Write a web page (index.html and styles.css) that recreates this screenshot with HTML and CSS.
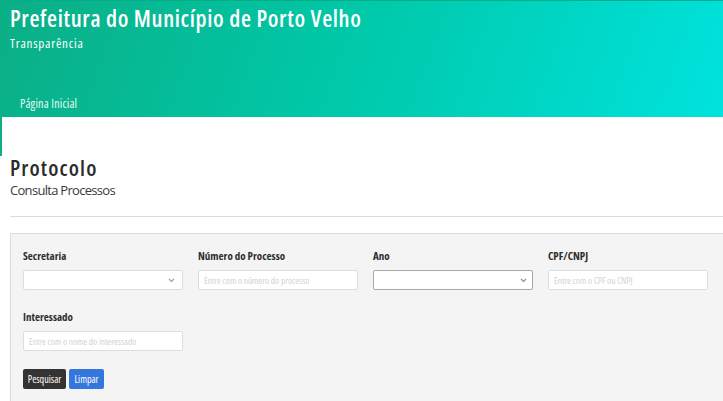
FILE: index.html
```html
<!DOCTYPE html>
<html lang="pt-BR">
<head>
<meta charset="utf-8">
<title>Protocolo - Consulta Processos</title>
<link rel="stylesheet" href="styles.css">
</head>
<body>
<header class="topbar">
  <h1 class="brand">Prefeitura do Município de Porto Velho</h1>
  <div class="brand-sub">Transparência</div>
  <nav class="nav"><a href="#">Página Inicial</a></nav>
</header>
<main class="content">
  <h2 class="page-title">Protocolo</h2>
  <div class="page-sub">Consulta Processos</div>
  <hr class="divider">
  <form class="panel">
    <div class="grid">
      <div class="field">
        <label class="lbl">Secretaria</label>
        <div class="select">
          <svg class="chev" width="7" height="5" viewBox="0 0 7 5"><path d="M1 1 L3.5 3.5 L6 1" fill="none" stroke="#8a9cc0" stroke-width="1.1"/></svg>
        </div>
      </div>
      <div class="field">
        <label class="lbl">Número do Processo</label>
        <div class="input"><span class="ph">Entre com o número do processo</span></div>
      </div>
      <div class="field">
        <label class="lbl">Ano</label>
        <div class="select dark">
          <svg class="chev" width="7" height="5" viewBox="0 0 7 5"><path d="M1 1 L3.5 3.5 L6 1" fill="none" stroke="#8c8c8c" stroke-width="1.1"/></svg>
        </div>
      </div>
      <div class="field">
        <label class="lbl">CPF/CNPJ</label>
        <div class="input"><span class="ph">Entre com o CPF ou CNPJ</span></div>
      </div>
      <div class="field">
        <label class="lbl">Interessado</label>
        <div class="input"><span class="ph">Entre com o nome do interessado</span></div>
      </div>
    </div>
    <div class="actions">
      <button type="button" class="btn btn-dark">Pesquisar</button>
      <button type="button" class="btn btn-blue">Limpar</button>
    </div>
  </form>
</main>
</body>
</html>
```
FILE: styles.css
```css
html, body {
  margin: 0;
  padding: 0;
  overflow: hidden;
  background: #fff;
}
body {
  font-family: "Open Sans", "DejaVu Sans", sans-serif;
  font-stretch: 75%;
  color: #333;
}
.topbar {
  height: 117px;
  box-sizing: border-box;
  border-top: 1px solid #05ad86;
  padding: 3px 10px 0 10px;
  display: flex;
  flex-direction: column;
  background: linear-gradient(110deg, #0bae85 0%, #00c7a6 45%, #00d6c4 75%, #00e3de 100%);
  color: #fff;
}
.brand {
  margin: 0;
  font-size: 23px;
  line-height: 28px;
  font-weight: 600;
  letter-spacing: 0.65px;
}
.brand-sub {
  margin-top: 3px;
  font-size: 13px;
  line-height: 16px;
  letter-spacing: 0.8px;
}
.nav {
  margin-top: auto;
  padding: 0 10px 5px;
  font-size: 12px;
  line-height: 16px;
  letter-spacing: 0.2px;
}
.nav a {
  color: #eafaf5;
  text-decoration: none;
}
.content {
  position: relative;
  padding: 36px 0 0 10px;
  width: calc(100% + 20px);
  box-sizing: border-box;
}
.content::before {
  content: "";
  position: absolute;
  left: 0;
  top: 0;
  width: 2px;
  height: 39px;
  background: #12ad86;
}
.page-title {
  margin: 0;
  font-size: 22px;
  line-height: 28px;
  font-weight: 600;
  letter-spacing: 1.1px;
  color: #2b2b2b;
}
.page-sub {
  font-size: 13px;
  line-height: 18px;
  font-stretch: 100%;
  letter-spacing: -0.7px;
  color: #3a3a3a;
}
.divider {
  margin: 17px 0 0 0;
  border: 0;
  border-top: 1px solid #dcdcdc;
  height: 0;
}
.panel {
  margin-top: 16px;
  background: #f4f4f4;
  border: 1px solid #dcdcdc;
  padding: 15px 12px 20px;
  min-height: 200px;
}
.grid {
  display: grid;
  grid-template-columns: repeat(4, 160px);
  column-gap: 15px;
  row-gap: 20px;
}
.lbl {
  display: block;
  font-size: 11px;
  line-height: 14px;
  font-weight: 700;
  color: #2e2e2e;
  margin-bottom: 7px;
}
.select, .input {
  position: relative;
  height: 20px;
  box-sizing: border-box;
  background: #fff;
  border: 1px solid #dddddd;
  border-radius: 2px;
  display: flex;
  align-items: center;
  padding: 0 5px;
}
.select {
  justify-content: flex-end;
  padding-right: 7px;
}
.select.dark {
  border-color: #a9a9a9;
  padding-right: 5px;
}
.chev {
  display: block;
}
.ph {
  font-size: 9.3px;
  color: #d2d2d2;
  white-space: nowrap;
  overflow: hidden;
}
.actions {
  margin-top: 18px;
  display: flex;
  gap: 3px;
}
.btn {
  height: 20px;
  border: 0;
  border-radius: 2px;
  color: #fff;
  font-family: inherit;
  font-stretch: 75%;
  font-size: 10px;
  padding: 0 4px;
  cursor: pointer;
}
.btn-dark {
  background: #333333;
  width: 43px;
}
.btn-blue {
  background: #3477dc;
  width: 35px;
}
```
